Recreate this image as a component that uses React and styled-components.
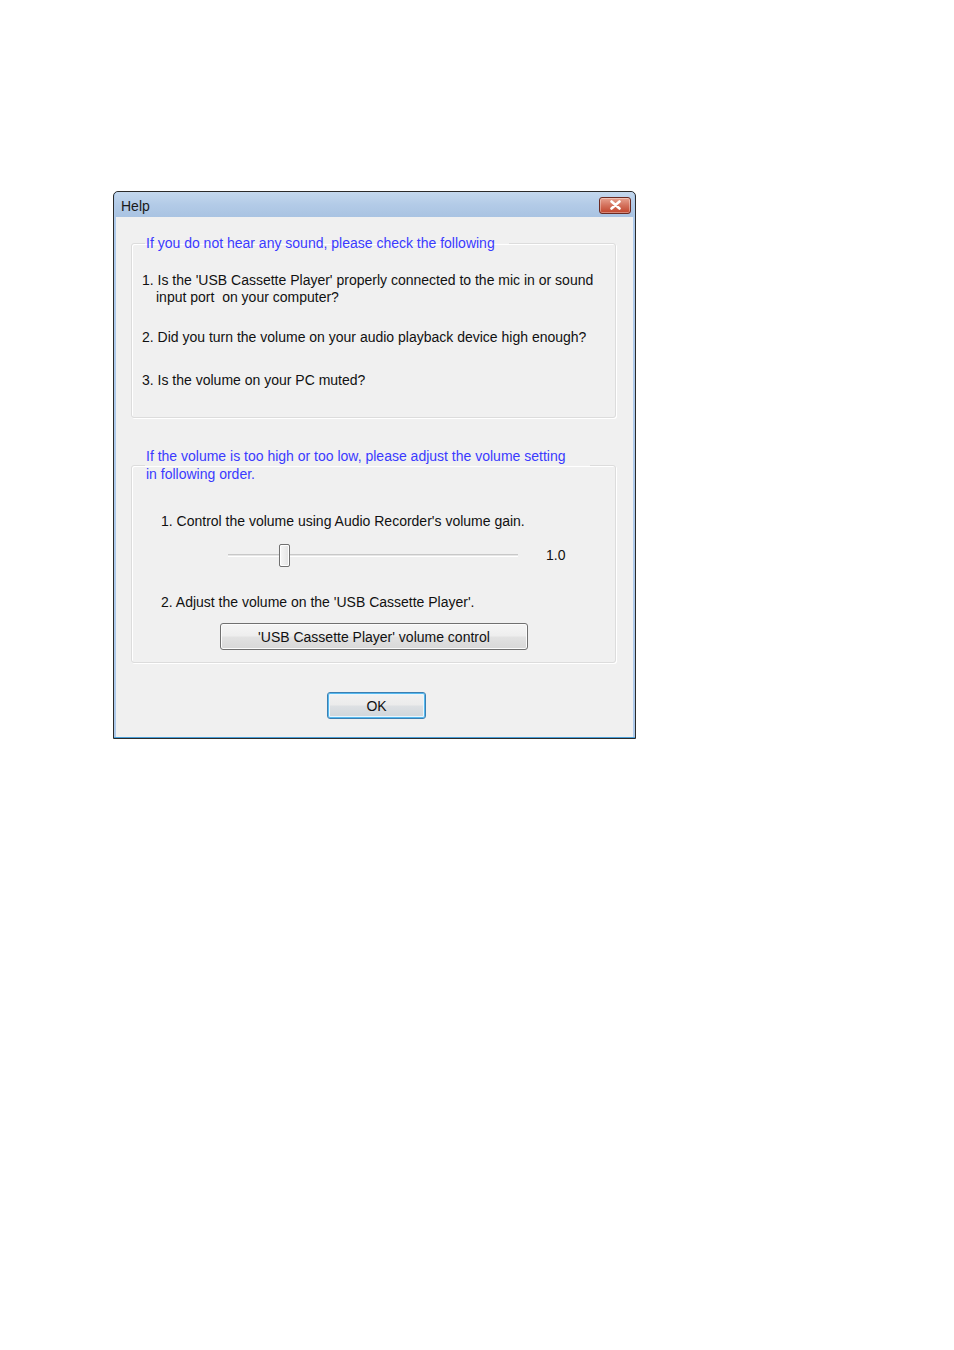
import styled, { createGlobalStyle } from 'styled-components';

const GlobalStyle = createGlobalStyle`
  html, body {
    margin: 0;
    padding: 0;
    background: #ffffff;
  }
  body {
    font-family: "Liberation Sans", Arial, sans-serif;
    font-size: 14px;
    color: #111;
  }
`;

const Page = styled.div`
  width: 954px;
  height: 1350px;
  padding: 191px 0 0 113px;
  box-sizing: border-box;
`;

const Window = styled.div`
  width: 523px;
  height: 548px;
  box-sizing: border-box;
  border: 1px solid #2b2b2b;
  border-radius: 5px 5px 0 0;
  background: #aecaeb;
  padding: 0 1px 1px 1px;
  display: flex;
  flex-direction: column;
  box-shadow: inset 0 -1px 0 #4a9fd8;
`;

const TitleBar = styled.div`
  height: 25px;
  display: flex;
  align-items: center;
  justify-content: space-between;
  padding: 0 3px 0 6px;
  background: linear-gradient(#c4d8ee, #b3cbe7 50%, #a9c3e2);
  border-radius: 4px 4px 0 0;
`;

const Title = styled.span`
  font-size: 14px;
  color: #1a1a1a;
  padding-top: 2px;
`;

const CloseButton = styled.div`
  width: 32px;
  height: 17px;
  margin-top: 1px;
  box-sizing: border-box;
  border: 1px solid #6b2a22;
  border-radius: 3px;
  background: linear-gradient(#e8a290, #d3705b 50%, #c0442c);
  display: flex;
  align-items: center;
  justify-content: center;
  box-shadow: inset 0 0 0 1px rgba(255, 255, 255, 0.35);
`;

const Client = styled.div`
  flex: 1;
  background: #f0f0f0;
  margin: 0 1px;
  padding: 17px 17px 0 15px;
  display: flex;
  flex-direction: column;
`;

const Group = styled.fieldset`
  margin: 0;
  border: 1px solid #dcdcdc;
  border-radius: 3px;
  box-shadow: inset 1px 1px 0 #ffffff, 1px 1px 0 #ffffff;
  padding: ${(p) => p.$pad};
  height: ${(p) => p.$height};
  box-sizing: border-box;
  display: flex;
  flex-direction: column;
  margin-bottom: ${(p) => p.$mb || '0'};
`;

const Legend = styled.legend`
  color: #3a3aff;
  padding: 0 14px 0 1px;
  margin-left: 3px;
  line-height: 18px;
  max-width: ${(p) => p.$max || 'none'};
`;

const Item = styled.div`
  line-height: 17px;
  padding-left: ${(p) => p.$indent || '0'};
  margin-top: ${(p) => p.$mt || '0'};
`;

const Wrap = styled.span`
  display: block;
  padding-left: 14px;
`;

const SliderRow = styled.div`
  display: flex;
  align-items: center;
  margin-top: 13px;
  padding-left: 86px;
  height: 24px;
`;

const Track = styled.div`
  position: relative;
  width: 290px;
  height: 3px;
  background: #e6e6e6;
  border-top: 1px solid #c8c8c8;
  border-bottom: 1px solid #ffffff;
  box-sizing: border-box;
`;

const Thumb = styled.div`
  position: absolute;
  left: 51px;
  top: -11px;
  width: 11px;
  height: 23px;
  box-sizing: border-box;
  border: 1px solid #707070;
  border-radius: 2px;
  background: linear-gradient(to right, #f7f7f7, #e3e3e3);
  box-shadow: inset 0 0 0 1px #ffffff;
`;

const Value = styled.span`
  margin-left: 28px;
`;

const Button = styled.button`
  font-family: "Liberation Sans", Arial, sans-serif;
  font-size: 14px;
  color: #111;
  width: ${(p) => p.$w};
  height: ${(p) => p.$h};
  margin: ${(p) => p.$m};
  border: 1px solid ${(p) => (p.$default ? '#3c7fb1' : '#707070')};
  border-radius: 3px;
  background: ${(p) =>
    p.$default
      ? 'linear-gradient(#f2f2f2, #ebebeb 48%, #dde0e3 52%, #cfd5da)'
      : 'linear-gradient(#f5f5f5, #eeeeee 48%, #e2e2e2 52%, #d8d8d8)'};
  box-shadow: ${(p) =>
    p.$default ? 'inset 0 0 0 1px #54b8ef, inset 0 0 0 2px #e9f6fd' : 'inset 0 0 0 1px #fcfcfc'};
  padding: 0;
  padding-top: 1px;
`;

const Footer = styled.div`
  display: flex;
  justify-content: center;
  padding: 29px 0 0 6px;
`;

export default function App() {
  return (
    <>
      <GlobalStyle />
      <Page>
        <Window>
          <TitleBar>
            <Title>Help</Title>
            <CloseButton>
              <svg width="13" height="10" viewBox="0 0 13 10">
                <path
                  d="M2.5 1.5 L10.5 8.5 M10.5 1.5 L2.5 8.5"
                  stroke="#ffffff"
                  strokeWidth="2.6"
                  strokeLinecap="round"
                />
              </svg>
            </CloseButton>
          </TitleBar>
          <Client>
            <Group $pad="20px 10px 0 10px" $height="184px" $mb="29px">
              <Legend>If you do not hear any sound, please check the following</Legend>
              <Item>
                1. Is the 'USB Cassette Player' properly connected to the mic in or sound
                <Wrap>input port&nbsp; on your computer?</Wrap>
              </Item>
              <Item $mt="23px">2. Did you turn the volume on your audio playback device high enough?</Item>
              <Item $mt="26px">3. Is the volume on your PC muted?</Item>
            </Group>
            <Group $pad="30px 10px 0 10px" $height="216px">
              <Legend $max="430px">
                If the volume is too high or too low, please adjust the volume setting in following order.
              </Legend>
              <Item $indent="19px">1. Control the volume using Audio Recorder's volume gain.</Item>
              <SliderRow>
                <Track>
                  <Thumb />
                </Track>
                <Value>1.0</Value>
              </SliderRow>
              <Item $indent="19px" $mt="27px">2. Adjust the volume on the 'USB Cassette Player'.</Item>
              <Button $w="308px" $h="27px" $m="12px 0 0 78px">
                'USB Cassette Player' volume control
              </Button>
            </Group>
            <Footer>
              <Button $default $w="99px" $h="27px" $m="0">
                OK
              </Button>
            </Footer>
          </Client>
        </Window>
      </Page>
    </>
  );
}
